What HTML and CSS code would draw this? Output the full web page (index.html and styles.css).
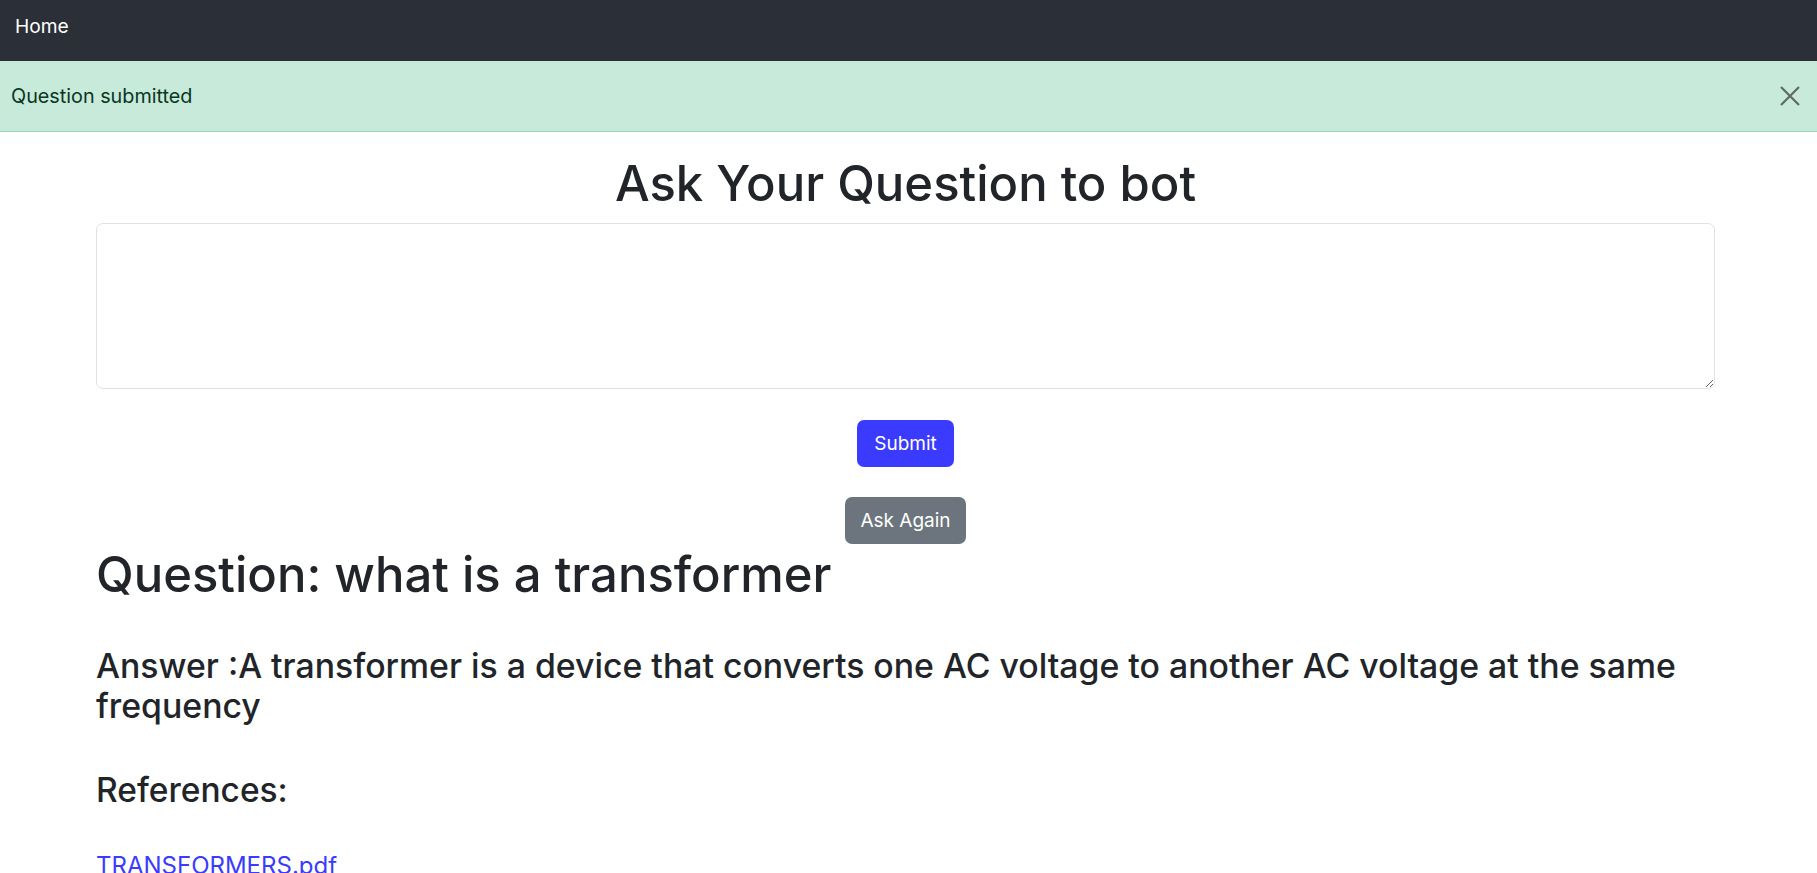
FILE: index.html
```html
<!DOCTYPE html>
<html lang="en">
<head>
<meta charset="utf-8">
<title>Ask Your Question to bot</title>
<link rel="stylesheet" href="styles.css">
</head>
<body>
<nav class="navbar">
  <a class="nav-link" href="#">Home</a>
</nav>
<div class="alert" role="alert">
  <span class="alert-text">Question submitted</span>
  <button class="btn-close" type="button" aria-label="Close">
    <svg width="20" height="20" viewBox="0 0 20 20"><path d="M1 1 L19 19 M19 1 L1 19" stroke="currentColor" stroke-width="2.2" fill="none"/></svg>
  </button>
</div>
<main class="container">
  <h1 class="title">Ask Your Question to bot</h1>
  <form class="ask-form">
    <textarea class="question-input"></textarea>
    <div class="btn-row submit-row"><button type="button" class="btn btn-primary">Submit</button></div>
    <div class="btn-row again-row"><button type="button" class="btn btn-secondary">Ask Again</button></div>
  </form>
  <h1 class="question">Question: what is a transformer</h1>
  <h3 class="answer">Answer :A transformer is a device that converts one AC voltage to another AC voltage at the same frequency</h3>
  <h3 class="refs">References:</h3>
  <h5 class="ref-item"><a class="ref-link" href="#">TRANSFORMERS.pdf</a></h5>
</main>
</body>
</html>
```

FILE: styles.css
```css
html, body {
  margin: 0;
  padding: 0;
  background: #ffffff;
}
body {
  font-family: Inter, "Open Sans", "Noto Sans", sans-serif;
  color: #212529;
  font-size: 19px;
}
.navbar {
  background: #2b2f37;
  height: 61px;
  box-sizing: border-box;
  padding: 12px 15px 0;
}
.nav-link {
  color: #ffffff;
  text-decoration: none;
  font-size: 19.2px;
  line-height: 28px;
}
.alert {
  background: #c7eadb;
  border-bottom: 1.5px solid #93d7bb;
  height: 71px;
  box-sizing: border-box;
  display: flex;
  align-items: center;
  justify-content: space-between;
  padding: 0 17px 0 11px;
  color: #0a3622;
}
.alert-text {
  font-size: 19.8px;
}
.btn-close {
  background: none;
  border: none;
  padding: 0;
  width: 20px;
  height: 20px;
  color: #5e6b64;
  display: flex;
}
.container {
  width: 1619px;
  margin-left: 96px;
}
.title {
  text-align: center;
  font-weight: 500;
  font-size: 49px;
  line-height: 59px;
  margin: 22px 0 10px;
}
.ask-form {
  display: flex;
  flex-direction: column;
}
.question-input {
  display: block;
  width: 100%;
  height: 166px;
  box-sizing: border-box;
  border: 1px solid #dee2e6;
  border-radius: 7px;
  margin: 0;
  resize: vertical;
  font-family: inherit;
}
.btn-row {
  display: flex;
  justify-content: center;
}
.submit-row { margin-top: 31px; }
.again-row { margin-top: 30px; }
.btn {
  font-family: inherit;
  font-size: 19px;
  height: 47px;
  border: none;
  border-radius: 7px;
  color: #ffffff;
  padding: 0;
  line-height: 47px;
}
.btn-primary {
  background: #3b3bff;
  width: 97px;
}
.btn-secondary {
  background: #6c757d;
  width: 121px;
}
.question {
  font-weight: 500;
  font-size: 49px;
  line-height: 59px;
  margin: 1px 0 0;
}
.answer {
  font-weight: 500;
  font-size: 33.8px;
  line-height: 40px;
  margin: 42px 0 0;
}
.refs {
  font-weight: 500;
  font-size: 33.5px;
  line-height: 40px;
  margin: 44px 0 0;
}
.ref-item {
  margin: 41px 0 0;
  font-size: 24px;
  font-weight: 400;
  line-height: 30px;
}
.ref-link {
  color: #3b3bff;
}
```
